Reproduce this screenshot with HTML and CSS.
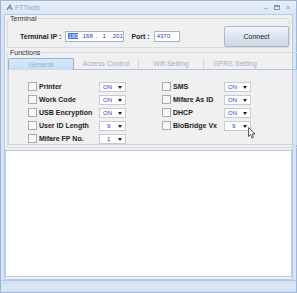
FILE: index.html
```html
<!DOCTYPE html>
<html lang="en">
<head>
    <meta charset="UTF-8">
    <title>FTTools</title>
    <link rel="stylesheet" href="styles.css">
</head>
<body>
    <div class="window">
        <div class="titlebar">
            <div class="title">
                <svg class="app-icon" width="7" height="7" viewBox="0 0 7 7"><path d="M1 6 L4 1 L6 6 M2 4 H5" stroke="#5d86c8" fill="none" stroke-width="1.2"/></svg>
                <span>FTTools</span>
            </div>
            <div class="controls">
                <span class="ctl">&#8211;</span>
                <span class="ctl box"></span>
                <span class="ctl">&#215;</span>
            </div>
        </div>

        <div class="client">
            <fieldset class="group terminal">
                <legend>Terminal</legend>
                <div class="terminal-row">
                    <span class="lbl">Terminal IP :</span>
                    <div class="ip-box"><span class="sel">193</span> .168 .&nbsp; 1&nbsp; .201</div>
                    <span class="lbl port-lbl">Port :</span>
                    <div class="port-box">4370</div>
                    <button class="connect">Connect</button>
                </div>
            </fieldset>

            <fieldset class="group functions">
                <legend>Functions</legend>
                <div class="tabs">
                    <div class="tab active">General</div>
                    <div class="tab">Access Control</div>
                    <div class="tab">Wifi Setting</div>
                    <div class="tab">GPRS Setting</div>
                    <div class="tab-rest"></div>
                </div>
                <div class="tab-panel">
                    <div class="col">
                        <div class="opt"><span class="chk"></span><span class="name">Printer</span><span class="combo">ON<i></i></span></div>
                        <div class="opt"><span class="chk"></span><span class="name">Work Code</span><span class="combo">ON<i></i></span></div>
                        <div class="opt"><span class="chk"></span><span class="name">USB Encryption</span><span class="combo">ON<i></i></span></div>
                        <div class="opt"><span class="chk"></span><span class="name">User ID Length</span><span class="combo num">9<i></i></span></div>
                        <div class="opt"><span class="chk"></span><span class="name">Mifare FP No.</span><span class="combo num">1<i></i></span></div>
                    </div>
                    <div class="col right">
                        <div class="opt"><span class="chk"></span><span class="name">SMS</span><span class="combo">ON<i></i></span></div>
                        <div class="opt"><span class="chk"></span><span class="name">Mifare As ID</span><span class="combo">ON<i></i></span></div>
                        <div class="opt"><span class="chk"></span><span class="name">DHCP</span><span class="combo">ON<i></i></span></div>
                        <div class="opt"><span class="chk"></span><span class="name">BioBridge Vx</span><span class="combo num">9<i></i>
                            <svg class="cursor" width="8" height="12" viewBox="0 0 8 12"><path d="M0.5 0.5 V9.5 L2.5 7.5 L4 11 L5.5 10.3 L4 7 H7 Z" fill="#fff" stroke="#333" stroke-width="0.8"/></svg>
                        </span></div>
                    </div>
                </div>
            </fieldset>

            <div class="log"></div>
        </div>
        <div class="statusbar"></div>
    </div>
</body>
</html>
```

FILE: styles.css
```css
* {
    box-sizing: border-box;
}

body {
    margin: 0;
    font-family: "Liberation Sans", Arial, sans-serif;
    font-size: 7px;
    color: #222;
    background: #fff;
}

.window {
    width: 297px;
    height: 293px;
    background: #d7e4f4;
    border: 1px solid #9fb6d6;
    display: flex;
    flex-direction: column;
    padding: 0 3px 2px 3px;
}

.titlebar {
    height: 13px;
    display: flex;
    align-items: center;
    justify-content: space-between;
    background: linear-gradient(#e6eef8, #dbe6f4);
    margin: 0 -3px;
    padding: 0 6px 0 5px;
}

.title {
    display: flex;
    align-items: center;
    gap: 2px;
    color: #98a6b8;
    font-size: 7px;
}

.controls {
    display: flex;
    gap: 6px;
    color: #7d8ea6;
    font-size: 7px;
}

.ctl.box {
    width: 6px;
    height: 5px;
    border: 1px solid #8798b0;
    border-top-width: 2px;
    margin-top: 1px;
}

.client {
    flex: 1;
    background: #f0f0f0;
    border: 1px solid #b8cce6;
    display: flex;
    flex-direction: column;
    padding: 0 2px 2px 2px;
}

.group {
    border: 1px solid #d5dbe3;
    border-radius: 2px;
    margin: 0;
    padding: 0;
}

.group legend {
    font-size: 7px;
    color: #333;
    padding: 0 1px;
    margin-left: 1px;
}

.terminal {
    height: 33px;
}

.terminal-row {
    display: flex;
    align-items: center;
    padding: 4px 0 0 12px;
}

.lbl {
    font-weight: bold;
    font-size: 7px;
    margin-right: 4px;
}

.port-lbl {
    margin-left: 7px;
}

.ip-box,
.port-box {
    background: #fff;
    border: 1px solid #a7b4c6;
    height: 11px;
    line-height: 9px;
    color: #3535c0;
    font-size: 6px;
    padding-left: 2px;
}

.ip-box {
    width: 59px;
    word-spacing: 1px;
}

.ip-box .sel {
    background: #3b78d8;
    color: #fff;
}

.port-box {
    width: 26px;
}

.connect {
    margin-left: auto;
    margin-right: 0;
    width: 65px;
    height: 21px;
    border: 1px solid #aeb9c8;
    border-radius: 2px;
    background: linear-gradient(#f2f5f9, #dce4ee 50%, #cfd9e5);
    font-family: inherit;
    font-size: 7px;
    color: #222;
}

.functions {
    margin-top: 1px;
    padding: 2px 2px 2px 0;
}

.tabs {
    display: flex;
    height: 12px;
}

.tab {
    width: 65px;
    text-align: center;
    line-height: 11px;
    color: #a9b0b8;
    font-size: 7px;
    border-right: 1px solid #d4d8de;
    border-bottom: 1px solid #a9c6e8;
}

.tab.active {
    width: 66px;
    background: linear-gradient(#d9e9fb, #c6ddf6);
    border: 1px solid #8fb4e0;
    border-bottom: none;
    border-radius: 2px 2px 0 0;
    color: #9ab0c8;
}

.tab:nth-child(4) {
    border-right: none;
    width: 62px;
}

.tab-rest {
    flex: 1;
    border-bottom: 1px solid #a9c6e8;
}

.tab-panel {
    display: flex;
    border: 1px solid #cfd7e2;
    border-top: none;
    padding: 10px 0 3px 19px;
    height: 75px;
}

.col {
    width: 134px;
}

.opt {
    display: flex;
    align-items: center;
    height: 13px;
}

.chk {
    width: 9px;
    height: 9px;
    border: 1px solid #a6acb4;
    background: #f8f8f8;
    margin-right: 2px;
}

.name {
    width: 60px;
    font-weight: bold;
    font-size: 7px;
}

.right .name {
    width: 51px;
}

.combo {
    position: relative;
    width: 27px;
    height: 10px;
    background: #fff;
    border: 1px solid #c5cbd3;
    color: #3535c0;
    font-size: 6px;
    line-height: 8px;
    padding-left: 3px;
}

.combo.num {
    padding-left: 7px;
}

.combo i {
    position: absolute;
    right: 3px;
    top: 3px;
    border-left: 2px solid transparent;
    border-right: 2px solid transparent;
    border-top: 3px solid #222;
}

.cursor {
    position: absolute;
    left: 23px;
    top: 5px;
}

.log {
    flex: 1;
    background: #fff;
    border: 1px solid #b8c9de;
    margin: 2px -2px 0 -2px;
}

.statusbar {
    height: 12px;
    margin: 0 -3px -2px -3px;
    background: linear-gradient(#cfdff2, #dbe7f5 60%, #d2e0f1);
    border-top: 1px solid #b9cce5;
}
```
